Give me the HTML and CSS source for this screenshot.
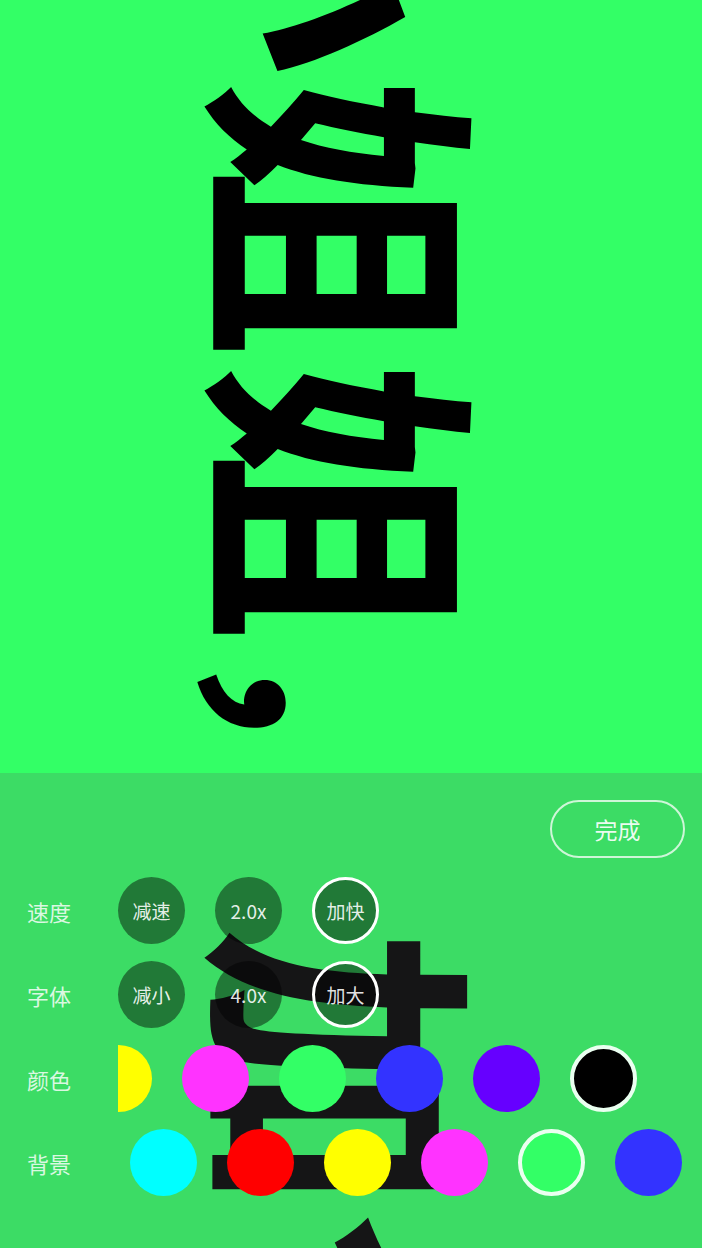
FILE: index.html
```html
<!DOCTYPE html>
<html lang="zh-CN">
<head>
    <meta charset="utf-8">
    <title>手持弹幕</title>
    <link rel="stylesheet" href="styles.css">
</head>
<body>
    <main class="stage">
        <div class="marquee">小姐姐<span class="comma">，</span>加个</div>
    </main>

    <!-- settings panel over the scrolling text -->
    <section class="panel">
        <div class="panel-head">
            <a class="done" href="javascript:void(0)">完成</a>
        </div>

        <div class="row">
            <span class="label">速度</span>
            <div class="opts">
                <span class="opt">减速</span>
                <span class="opt">2.0x</span>
                <span class="opt on">加快</span>
            </div>
        </div>

        <div class="row">
            <span class="label">字体</span>
            <div class="opts">
                <span class="opt">减小</span>
                <span class="opt">4.0x</span>
                <span class="opt on">加大</span>
            </div>
        </div>

        <div class="row">
            <span class="label">颜色</span>
            <div class="swatches">
                <div class="track scrolled">
                    <span class="dot yellow"></span>
                    <span class="dot pink"></span>
                    <span class="dot green"></span>
                    <span class="dot blue"></span>
                    <span class="dot violet"></span>
                    <span class="dot black on"></span>
                </div>
            </div>
        </div>

        <div class="row">
            <span class="label">背景</span>
            <div class="swatches">
                <div class="track">
                    <span class="dot cyan"></span>
                    <span class="dot red"></span>
                    <span class="dot yellow"></span>
                    <span class="dot pink"></span>
                    <span class="dot green on"></span>
                    <span class="dot blue"></span>
                </div>
            </div>
        </div>
    </section>
</body>
</html>
```

FILE: styles.css
```css
html,body{margin:0;padding:0;}
body{width:702px;height:1248px;overflow:hidden;position:relative;background:#33ff66;font-family:"Noto Sans CJK SC","Noto Sans",sans-serif;}

.stage{display:flex;justify-content:center;height:1248px;overflow:hidden;}
.marquee{writing-mode:vertical-rl;text-orientation:sideways;font-family:"Noto Sans CJK SC",sans-serif;font-weight:700;font-size:284px;line-height:1;color:#000;white-space:nowrap;margin-top:-209px;margin-right:-4px;}
.marquee .comma{font-size:232px;margin-top:-6px;margin-bottom:58px;}

.panel{position:absolute;left:0;right:0;top:773px;bottom:0;background:rgba(96,96,100,.22);}
.panel-head{display:flex;justify-content:flex-end;padding:27px 17px 19px 0;}
.done{width:131px;height:54px;border:2px solid rgba(255,255,255,.75);border-radius:29px;display:flex;align-items:center;justify-content:center;color:rgba(255,255,255,.92);font-size:23px;text-decoration:none;}

.row{display:flex;align-items:center;height:67px;margin-bottom:17px;}
.label{width:118px;padding-left:27px;box-sizing:border-box;font-size:22px;color:rgba(255,255,255,.82);}
.opts{display:flex;gap:30px;}
.opt{width:67px;height:67px;border-radius:50%;background:rgba(0,0,0,.45);display:flex;align-items:center;justify-content:center;color:rgba(255,255,255,.9);font-size:19px;box-sizing:border-box;}
.opt.on{border:3px solid #fff;}

.swatches{flex:1;overflow:hidden;padding-left:12px;}
.track{display:flex;gap:30px;}
.track.scrolled{margin-left:-45px;}
.dot{flex:none;width:67px;height:67px;border-radius:50%;box-sizing:border-box;}
.dot.on{border:4px solid #eafff0;}
.yellow{background:#ffff00;}
.pink{background:#ff33ff;}
.green{background:#33ff66;}
.blue{background:#3333ff;}
.violet{background:#6600ff;}
.black{background:#000;}
.cyan{background:#00ffff;}
.red{background:#ff0000;}
```
